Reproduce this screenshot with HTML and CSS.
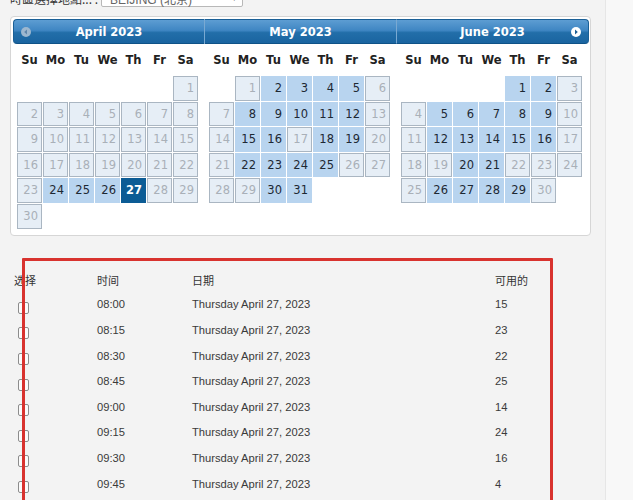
FILE: index.html
```html
<!DOCTYPE html>
<html lang="zh">
<head>
<meta charset="utf-8">
<title>Booking</title>
<link rel="stylesheet" href="styles.css">
</head>
<body>
<div class="page">
  <div class="main">
    <div class="topbar">
      <span class="tz-label">時區選擇地點... :</span>
      <div class="select"><span>BEIJING (北京)</span><span class="caret">▾</span></div>
    </div>

    <div class="calendar">
      <div class="month">
        <div class="month-head first">
          <svg class="nav prev" width="10" height="10" viewBox="0 0 10 10"><circle cx="5" cy="5" r="5" fill="#9db7cf"/><path d="M6 2.5 L3.2 5 L6 7.5 Z" fill="#5f86ab"/></svg>
          <span class="title">April 2023</span>
          <span></span>
        </div>
        <div class="dow"><span>Su</span><span>Mo</span><span>Tu</span><span>We</span><span>Th</span><span>Fr</span><span>Sa</span></div>
        <div class="days">
          <span></span><span></span><span></span><span></span><span></span><span></span>
          <span class="day off">1</span>
          <span class="day off">2</span><span class="day off">3</span><span class="day off">4</span><span class="day off">5</span><span class="day off">6</span><span class="day off">7</span><span class="day off">8</span>
          <span class="day off">9</span><span class="day off">10</span><span class="day off">11</span><span class="day off">12</span><span class="day off">13</span><span class="day off">14</span><span class="day off">15</span>
          <span class="day off">16</span><span class="day off">17</span><span class="day off">18</span><span class="day off">19</span><span class="day off">20</span><span class="day off">21</span><span class="day off">22</span>
          <span class="day off">23</span><span class="day on">24</span><span class="day on">25</span><span class="day on">26</span><span class="day sel">27</span><span class="day off">28</span><span class="day off">29</span>
          <span class="day off">30</span>
        </div>
      </div>

      <div class="month">
        <div class="month-head">
          <span></span>
          <span class="title">May 2023</span>
          <span></span>
        </div>
        <div class="dow"><span>Su</span><span>Mo</span><span>Tu</span><span>We</span><span>Th</span><span>Fr</span><span>Sa</span></div>
        <div class="days">
          <span></span>
          <span class="day off">1</span><span class="day on">2</span><span class="day on">3</span><span class="day on">4</span><span class="day on">5</span><span class="day off">6</span>
          <span class="day off">7</span><span class="day on">8</span><span class="day on">9</span><span class="day on">10</span><span class="day on">11</span><span class="day on">12</span><span class="day off">13</span>
          <span class="day off">14</span><span class="day on">15</span><span class="day on">16</span><span class="day off">17</span><span class="day on">18</span><span class="day on">19</span><span class="day off">20</span>
          <span class="day off">21</span><span class="day on">22</span><span class="day on">23</span><span class="day on">24</span><span class="day on">25</span><span class="day off">26</span><span class="day off">27</span>
          <span class="day off">28</span><span class="day off">29</span><span class="day on">30</span><span class="day on">31</span>
        </div>
      </div>

      <div class="month">
        <div class="month-head last">
          <span></span>
          <span class="title">June 2023</span>
          <svg class="nav next" width="10" height="10" viewBox="0 0 10 10"><circle cx="5" cy="5" r="5" fill="#ffffff"/><path d="M4 2.5 L6.8 5 L4 7.5 Z" fill="#1d5f95"/></svg>
        </div>
        <div class="dow"><span>Su</span><span>Mo</span><span>Tu</span><span>We</span><span>Th</span><span>Fr</span><span>Sa</span></div>
        <div class="days">
          <span></span><span></span><span></span><span></span>
          <span class="day on">1</span><span class="day on">2</span><span class="day off">3</span>
          <span class="day off">4</span><span class="day on">5</span><span class="day on">6</span><span class="day on">7</span><span class="day on">8</span><span class="day on">9</span><span class="day off">10</span>
          <span class="day off">11</span><span class="day on">12</span><span class="day on">13</span><span class="day on">14</span><span class="day on">15</span><span class="day on">16</span><span class="day off">17</span>
          <span class="day off">18</span><span class="day off">19</span><span class="day on">20</span><span class="day on">21</span><span class="day off">22</span><span class="day off">23</span><span class="day off">24</span>
          <span class="day off">25</span><span class="day on">26</span><span class="day on">27</span><span class="day on">28</span><span class="day on">29</span><span class="day off">30</span>
        </div>
      </div>
    </div>

    <div class="slots">
      <table class="slot-table">
        <colgroup><col class="c-sel"><col class="c-time"><col class="c-date"><col class="c-avail"></colgroup>
        <thead>
          <tr><th>选择</th><th>时间</th><th>日期</th><th>可用的</th></tr>
        </thead>
        <tbody>
          <tr><td><span class="check"></span></td><td>08:00</td><td>Thursday April 27, 2023</td><td>15</td></tr>
          <tr><td><span class="check"></span></td><td>08:15</td><td>Thursday April 27, 2023</td><td>23</td></tr>
          <tr><td><span class="check"></span></td><td>08:30</td><td>Thursday April 27, 2023</td><td>22</td></tr>
          <tr><td><span class="check"></span></td><td>08:45</td><td>Thursday April 27, 2023</td><td>25</td></tr>
          <tr><td><span class="check"></span></td><td>09:00</td><td>Thursday April 27, 2023</td><td>14</td></tr>
          <tr><td><span class="check"></span></td><td>09:15</td><td>Thursday April 27, 2023</td><td>24</td></tr>
          <tr><td><span class="check"></span></td><td>09:30</td><td>Thursday April 27, 2023</td><td>16</td></tr>
          <tr><td><span class="check"></span></td><td>09:45</td><td>Thursday April 27, 2023</td><td>4</td></tr>
          <tr><td><span class="check"></span></td><td>10:00</td><td>Thursday April 27, 2023</td><td>18</td></tr>
        </tbody>
      </table>
      <div class="annot"></div>
    </div>
  </div>
  <div class="side"></div>
</div>
</body>
</html>
```

FILE: styles.css
```css
html, body {
  margin: 0;
  padding: 0;
  background: #f7f7f7;
  height: 500px;
  overflow: hidden;
}

.page {
  display: flex;
  height: 500px;
  overflow: hidden;
}

.main {
  width: 605px;
  flex: none;
  background: #f3f3f3;
  border-right: 1px solid #e6e6e6;
}

.side {
  flex: 1;
  background: #f8f8f8;
}

/* top bar (scrolled, partially visible) */
.topbar {
  display: flex;
  align-items: center;
  height: 18px;
  margin-top: -11px;
  padding-left: 10px;
}

.tz-label {
  width: 91px;
  font-family: "Noto Sans CJK SC", "Liberation Sans", sans-serif;
  font-size: 12px;
  color: #333;
  white-space: nowrap;
  overflow: hidden;
}

.select {
  box-sizing: border-box;
  width: 142px;
  height: 18px;
  border: 1px solid #b8b8b8;
  border-radius: 2px;
  background: #fff;
  display: flex;
  align-items: center;
  justify-content: space-between;
  padding: 0 5px 0 8px;
  font-family: "Liberation Sans", "Noto Sans CJK SC", sans-serif;
  font-size: 12px;
  color: #666;
}

.caret {
  font-size: 9px;
  color: #555;
}

/* calendar */
.calendar {
  box-sizing: border-box;
  width: 581px;
  margin: 9px 0 0 10px;
  padding: 2px 2px 6px;
  background: #fff;
  border: 1px solid #d6d6d6;
  border-radius: 4px;
  display: flex;
  font-family: "DejaVu Sans", Verdana, sans-serif;
}

.month {
  width: 192px;
  flex: none;
}

.month-head {
  box-sizing: border-box;
  height: 25px;
  display: grid;
  grid-template-columns: 1fr auto 1fr;
  align-items: center;
  padding: 0 7px;
  background: linear-gradient(to bottom, #5d9dd2 0%, #3f86c3 45%, #226ea9 55%, #1a64a0 100%);
  border-top: 1px solid #1a5f96;
  border-bottom: 1px solid #0f5287;
  border-right: 1px solid #79a9d2;
}

.month-head.first {
  border-left: 1px solid #1a5f96;
  border-radius: 4px 0 0 4px;
}

.month-head.last {
  border-right: 1px solid #1a5f96;
  border-radius: 0 4px 4px 0;
}

.month-head .title {
  color: #fff;
  font-weight: bold;
  font-size: 11.5px;
}

.nav.prev { justify-self: start; }
.nav.next { justify-self: end; }

.dow {
  display: grid;
  grid-template-columns: repeat(7, 25px);
  column-gap: 1px;
  padding: 4px 0 0 4px;
  height: 24px;
  margin-bottom: 4px;
  align-items: center;
}

.dow span {
  text-align: center;
  font-weight: bold;
  font-size: 11.5px;
  color: #222;
}

.days {
  display: grid;
  grid-template-columns: repeat(7, 25px);
  grid-auto-rows: 24.6px;
  gap: 1px;
  padding-left: 4px;
}

.day {
  box-sizing: border-box;
  border: 1px solid transparent;
  text-align: right;
  padding-right: 3px;
  font-size: 11.5px;
  line-height: 22.6px;
}

.day.off {
  background: #e6eef6;
  border-color: #aab6c2;
  color: #a9b0b8;
}

.day.on {
  background: #b8d4ef;
  border-color: #b8d4ef;
  color: #1d2833;
}

.day.sel {
  background: #0c5c95;
  border-color: #0c5c95;
  color: #fff;
  font-weight: bold;
}

/* time slots */
.slots {
  position: relative;
  margin-top: 32px;
  padding-left: 14px;
}

.slot-table {
  border-collapse: collapse;
  table-layout: fixed;
  width: 560px;
  font-family: "Liberation Sans", Arial, sans-serif;
  font-size: 11.2px;
  color: #3a3a3a;
}

.c-sel { width: 83px; }
.c-time { width: 95px; }
.c-date { width: 303px; }
.c-avail { width: 79px; }

.slot-table th {
  height: 24px;
  padding: 0;
  text-align: left;
  font-weight: normal;
  font-family: "Noto Sans CJK SC", "Liberation Sans", sans-serif;
  font-size: 11px;
  color: #333;
  vertical-align: middle;
}

.slot-table td {
  height: 25.6px;
  padding: 0;
  vertical-align: middle;
  white-space: nowrap;
}

.check {
  display: block;
  box-sizing: border-box;
  width: 11px;
  height: 12px;
  margin: 7px 0 0 4px;
  border: 1px solid #8c8c8c;
  border-radius: 2px;
  background: #fbfbfb;
}

.annot {
  position: absolute;
  left: 22px;
  top: -10px;
  width: 531px;
  height: 400px;
  box-sizing: border-box;
  border: 3px solid #d8322e;
  border-radius: 1px;
  pointer-events: none;
}
```
